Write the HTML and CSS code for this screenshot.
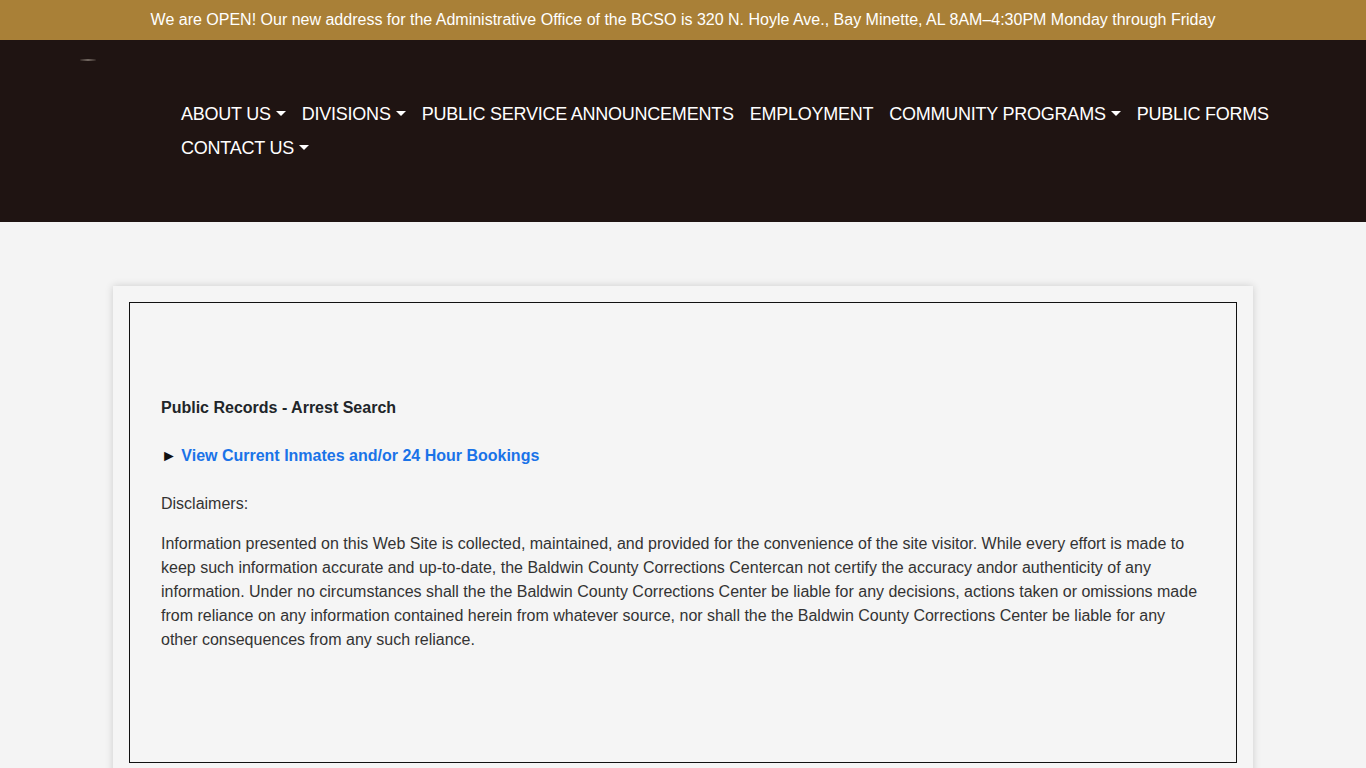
FILE: index.html
```html
<!DOCTYPE html>
<html lang="en">
<head>
<meta charset="utf-8">
<title>Public Records - Arrest Search</title>
<link rel="stylesheet" href="styles.css">
</head>
<body>
<div class="banner">We are OPEN! Our new address for the Administrative Office of the BCSO is 320 N. Hoyle Ave., Bay Minette, AL 8AM–4:30PM Monday through Friday</div>
<header class="header">
  <div class="brand"><span class="brand-mark"></span></div>
  <nav class="nav">
    <ul class="nav-list">
      <li><a class="nav-link caret" href="#">ABOUT US</a></li>
      <li><a class="nav-link caret" href="#">DIVISIONS</a></li>
      <li><a class="nav-link" href="#">PUBLIC SERVICE ANNOUNCEMENTS</a></li>
      <li><a class="nav-link" href="#">EMPLOYMENT</a></li>
      <li><a class="nav-link caret" href="#">COMMUNITY PROGRAMS</a></li>
      <li><a class="nav-link" href="#">PUBLIC FORMS</a></li>
      <li><a class="nav-link caret" href="#">CONTACT US</a></li>
    </ul>
  </nav>
</header>
<main class="main">
  <div class="card">
    <div class="frame">
      <p class="title">Public Records - Arrest Search</p>
      <p class="link-row"><span class="arrow">►</span> <a class="link" href="#">View Current Inmates and/or 24 Hour Bookings</a></p>
      <p class="label">Disclaimers:</p>
      <p class="text">Information presented on this Web Site is collected, maintained, and provided for the convenience of the site visitor. While every effort is made to keep such information accurate and up-to-date, the Baldwin County Corrections Centercan not certify the accuracy andor authenticity of any information. Under no circumstances shall the the Baldwin County Corrections Center be liable for any decisions, actions taken or omissions made from reliance on any information contained herein from whatever source, nor shall the the Baldwin County Corrections Center be liable for any other consequences from any such reliance.</p>
    </div>
  </div>
</main>
</body>
</html>
```
FILE: styles.css
```css
* { box-sizing: border-box; }
html, body { margin: 0; padding: 0; }
body {
  background: #f4f4f4;
  font-family: "Liberation Sans", Arial, sans-serif;
  color: #212529;
}
.banner {
  height: 40px;
  background: #a98037;
  color: #fff;
  font-size: 16px;
  line-height: 40px;
  text-align: center;
  white-space: nowrap;
  overflow: hidden;
}
.header {
  height: 182px;
  background: #1f1412;
  display: flex;
  align-items: flex-start;
}
.brand {
  width: 173px;
  flex: none;
  padding: 19px 0 0 80px;
}
.brand-mark {
  display: block;
  width: 16px;
  height: 2px;
  background: linear-gradient(to right, rgba(120,110,100,0.2), rgba(170,160,150,0.6), rgba(120,110,100,0.2));
  border-radius: 1px;
}
.nav { width: 1125px; padding-top: 57px; }
.nav-list {
  list-style: none;
  margin: 0;
  padding: 0;
  display: flex;
  flex-wrap: wrap;
}
.nav-link {
  display: block;
  padding: 0 8px;
  color: #fff;
  text-decoration: none;
  font-size: 18px;
  line-height: 34px;
  letter-spacing: -0.24px;
  white-space: nowrap;
}
.caret::after {
  content: "";
  display: inline-block;
  margin-left: 5px;
  vertical-align: 4px;
  border-top: 5px solid #fff;
  border-left: 5px solid transparent;
  border-right: 5px solid transparent;
}
.main { padding-top: 64px; }
.card {
  width: 1140px;
  margin: 0 auto;
  background: #f5f5f5;
  padding: 16px;
  box-shadow: 0 0 8px rgba(0,0,0,0.16);
}
.frame {
  border: 1px solid #111;
  height: 461px;
  padding: 93px 31px 0;
}
.frame p { margin: 0; font-size: 16px; line-height: 24px; }
.title { font-weight: bold; margin-bottom: 24px !important; }
.link-row { font-weight: bold; margin-bottom: 24px !important; }
.arrow { color: #111; font-weight: normal; }
.link { color: #1a73e8; text-decoration: none; }
.label { color: #333; margin-bottom: 16px !important; }
.text { color: #333; }
```
